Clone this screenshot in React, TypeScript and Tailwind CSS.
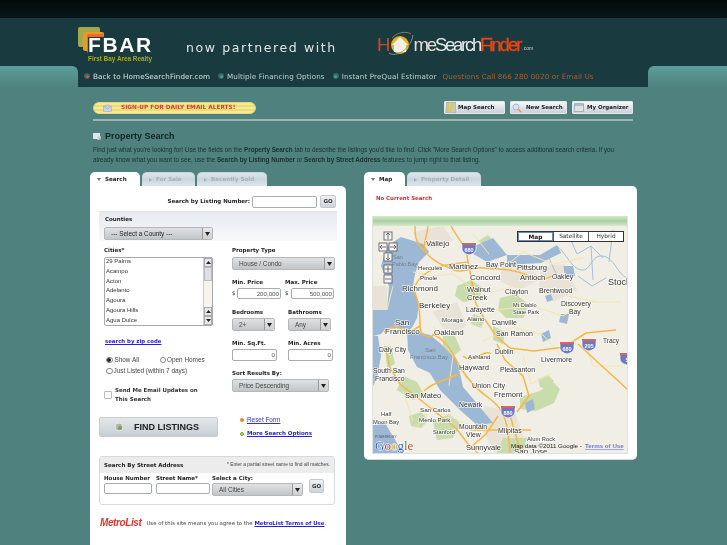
import React from "react";

const Arrow = () => (
  <svg width="5" height="4" viewBox="0 0 5 4"><path d="M0 0h5L2.5 4z" fill="#222" /></svg>
);

const Select = ({ w, label, h = "h-[13px]", text = "text-[#444]" }: { w: string; label: string; h?: string; text?: string }) => (
  <div className={`${w} ${h} ${text} flex items-center justify-between rounded-[2px] border border-[#b5b8ba] bg-gradient-to-b from-[#dfe1e3] to-[#c3c6c8] text-[5.6px]`}>
    <span className="pl-1.5 font-['Liberation_Sans',sans-serif] text-[6.4px]">{label}</span>
    <span className="flex h-full w-[10px] items-center justify-center border-l border-[#999] bg-gradient-to-b from-[#e8e8e8] to-[#cfcfcf]"><Arrow /></span>
  </div>
);

const Input = ({ w, h = "h-[11px]", value = "" }: { w: string; h?: string; value?: string }) => (
  <div className={`${w} ${h} rounded-[2px] border border-[#a9adb0] bg-white pr-px text-right font-['Liberation_Sans',sans-serif] text-[6.2px] leading-[10px] text-[#555]`}>{value}</div>
);

const Lbl = ({ children, className = "" }: { children: React.ReactNode; className?: string }) => (
  <div className={`text-[5.5px] font-bold leading-[7px] text-[#222] ${className}`}>{children}</div>
);

const Go = ({ className = "" }: { className?: string }) => (
  <div className={`flex items-center justify-center rounded-[2px] border border-[#c2c8cd] bg-gradient-to-b from-[#eef1f4] to-[#ccd3da] text-[5.5px] font-bold text-[#333] ${className}`}>GO</div>
);

const Radio = ({ on = false }: { on?: boolean }) => (
  <span className="flex h-[6.5px] w-[6.5px] items-center justify-center rounded-full border border-[#888] bg-white">
    {on && <span className="h-[4px] w-[4px] rounded-full bg-[#222]" />}
  </span>
);

const Tab = ({ w, label, active = false }: { w: string; label: string; active?: boolean }) => (
  <div className={`${w} flex h-[14px] items-center gap-[4px] rounded-t-[5px] pl-[7px] text-[5.6px] font-bold ${active ? "bg-white text-[#222]" : "border-t border-[#c5d3dc] bg-gradient-to-b from-[#dce5ea] via-[#c9d6e0] to-[#dde5ea] text-[#a6b0b7]"}`}>
    <span className={active ? "text-[#777]" : "text-[#a6b0b7]"}>
      {active ? <svg width="4" height="3" viewBox="0 0 4 3"><path d="M0 0h4L2 3z" fill="#777" /></svg> : <svg width="3" height="4" viewBox="0 0 3 4"><path d="M0 0l3 2-3 2z" fill="#a6b0b7" /></svg>}
    </span>
    {label}
  </div>
);

const NavBullet = ({ c }: { c: string }) => (
  <span className="flex h-[6px] w-[6px] items-center justify-center rounded-full bg-[#2f6a6a]"><span className={`h-[3px] w-[3px] rounded-full ${c}`} /></span>
);

const TopBtn = ({ w, label, icon }: { w: string; label: string; icon: React.ReactNode }) => (
  <div className={`${w} flex h-[13px] items-center gap-[2px] rounded-[1px] border border-[#e4e8ec] bg-gradient-to-b from-[#f6f7f9] to-[#c9d0d9] pl-px text-[5.5px] font-bold text-[#1c1c1c]`}>
    {icon}
    {label}
  </div>
);

type L = [string, number, number, number?, string?];
const labels: L[] = [
  ["Vallejo", 53, 20, 8], ["Hercules", 45, 44, 6.2], ["Martinez", 76, 43, 7.6], ["Bay Point", 113, 41, 7], ["Pittsburg", 144, 44, 7.6],
  ["Pinole", 47, 54, 6.2], ["Concord", 97, 54, 8], ["Antioch", 147, 54, 7.6], ["Oakley", 179, 53, 6.8], ["Stock", 235, 59, 9],
  ["Richmond", 29, 65, 8], ["Walnut", 94, 66, 7.6], ["Creek", 94, 74, 7.6], ["Clayton", 132, 68, 6.8], ["Brentwood", 166, 67, 7],
  ["Discovery", 188, 80, 6.8], ["Bay", 196, 88, 6.8], ["Mt Diablo", 140, 81, 5.6], ["State Park", 140, 87.5, 5.6], ["Berkeley", 46, 82, 8],
  ["Lafayette", 93, 86, 7], ["San", 22, 99, 8], ["Francisco", 12, 108, 8], ["Moraga", 69, 96, 6.2], ["Alamo", 94, 95, 6.2],
  ["Danville", 119, 99, 7], ["Oakland", 61, 109, 8], ["San Ramon", 123, 110, 7], ["Daly City", 6, 126, 6.8], ["Ashland", 95, 133, 6.2],
  ["Dublin", 122, 128, 6.5], ["Livermore", 168, 136, 7], ["Tracy", 230, 117, 6.5], ["Hayward", 86, 144, 7.6], ["Pleasanton", 127, 146, 7],
  ["South San", 0, 147, 6.8], ["Francisco", 2, 155, 6.8], ["Union City", 99, 162, 7.2], ["Fremont", 121, 171, 7.6], ["San Mateo", 32, 172, 7.5],
  ["Newark", 86, 181, 6.8], ["San Carlos", 47, 186, 6.2], ["Half", 8, 190, 5.8], ["Moon Bay", 0, 198, 5.8], ["Menlo Park", 46, 196, 6.2],
  ["Stanford", 60, 208, 5.8], ["Mountain", 86, 203, 6.8], ["View", 93, 210.5, 6.8], ["Milpitas", 125, 207, 7], ["Alum Rock", 154, 215, 5.8],
  ["Sunnyvale", 93, 224, 7.5], ["San Jose", 141, 228, 8],
  ["San", 20, 33, 5.5, "#6f7f90"], ["Pablo Bay", 19, 40, 5.5, "#6f7f90"], ["San", 52, 126, 6, "#6f7f90"], ["Francisco Bay", 37, 133, 6, "#6f7f90"],
];

const Shield = ({ x, y, t }: { x: number; y: number; t: string }) => (
  <g transform={`translate(${x} ${y})`}>
    <path d="M-7-5h14v6c0 3-3 5-7 6-4-1-7-3-7-6z" fill="#6b78c4" stroke="#fff" strokeWidth=".7" />
    <path d="M-7-5h14v2.2h-14z" fill="#d9645d" />
    <text x="0" y="3.5" textAnchor="middle" fontSize="5.5" fontWeight="700" fill="#fff" fontFamily="Liberation Sans">{t}</text>
  </g>
);

const Ctl = ({ x, y, d }: { x: number; y: number; d: string }) => (
  <g transform={`translate(${x} ${y})`}>
    <rect x="-4" y="-4" width="8" height="8" fill="#f4f4f4" stroke="#555" strokeWidth=".8" />
    <path d={d} fill="none" stroke="#555" strokeWidth=".8" />
  </g>
);

const MapArt = () => (
  <svg width="254" height="227" viewBox="0 0 254 227" className="absolute inset-0">
    <rect width="254" height="227" fill="#f1eee6" />
    <g fill="#e8e3d6">
      <path d="M40 6l30-6 10 14-16 8-18-2zM128 36l30 4 8 14-20 10-18-8zM168 40l24-2 12 26-24 12-14-16zM112 180l30 6 10 30-30 11-16-30zM60 86l24-10 10 24-20 8zM0 60l14 0 0 24-14 0z" />
    </g>
    <g fill="#c9dcab">
      <path d="M84 60l14-6 12 8-4 12-16 2-8-6zM127 72l16-4 12 10-4 14-18 0-8-8zM147 171l20-6 12-10 8 8-6 14-18 8-16-2zM165 153l10-4 6 6-6 8-8-2zM30 150l14 6 8 14-12 4-16-10zM60 196l16-8 12 10-8 14-16 2zM36 190l12-4 8 8-8 8-10-2zM70 110l12 0 6 14-8 6-10-10zM105 15l10-6 6 6-8 6zM120 100l12 6-2 12-10-4zM100 88l12 4-4 10-10-4zM130 212l24 0-4 15-26 0zM12 120l6 0 4 18-8 4z" />
    </g>
    <g fill="#9db8d4">
      <path d="M14 20L28 11 50 18 56 26 46 36 42 48 40 60 46 78 44 92 40 100 37 104 57 109 67 117 84 134 87 147 90 161 107 181 120 197 104 199 87 184 67 164 57 147 44 141 35 124 34 104 30 102 12 103 8 108 0 110 0 84 14 84 16 60 8 40z" />
      <path d="M0 110H5L8 130 4 152 0 160zM0 199l12-2 18 30H0zM97 22l23-10 14 17-20 7-17-10zM134 29l33 0 17-10 4 8-20 10-34 2z" />
      <path d="M188 88l8 0 -2 10-8-2zM190 40h10l2 10-10 2zM152 177l8-4 2 10-8 4zM168 108l8-4 2 8-8 4zM172 70l6-2 2 6-6 2z" />
    </g>
    <g fill="none" stroke="#a7bfd8" strokeWidth="1">
      <path d="M184 20c10 8 14 22 24 24s10-16 22-14 14 18 24 22M196 10l8 18 14-8 12 12M205 50l14 10 14-8M218 20l2 34M240 4l-4 32M176 32l10 22 12-14" />
    </g>
    <g fill="none" stroke="#f7e6a8" strokeWidth="1">
      <path d="M40 46l20 4 20-2 20 14 20 4 30-8M120 84l40-4 30 10 24-14 34 0M110 115l30-14 30 8 20 22M150 130l8 28 20-10M40 205l20-24 30 16 30 6 40 10M130 42l20-16 30 12 30-6M20 60l-6 24M60 100l20 30 -4 30M190 40l4 30 30 6M210 110l10 30 30 0M30 165l10 30M100 8l16 20" />
    </g>
    <g fill="none" stroke="#f6b845" strokeWidth="1.5">
      <path d="M78 0c6 12 16 20 17 36l4 20 4 22 8 14 12 18 14 12 24 3 30-4 22-14 30-3" />
      <path d="M55 0c-1 12-6 18-2 26s18 14 28 18 18-4 30-2 28 0 40 6 22 6 28 2" />
      <path d="M42 0c0 10 0 16 10 26" />
      <path d="M95 36c-14 2-28 2-40 10s-16 16-12 24 4 20 4 30 10 14 14 8" />
      <path d="M47 100l-10 6-16-6-10 6M61 109c14 6 20 22 26 32s16 22 30 32 18 22 20 54" />
      <path d="M90 130c10 10 20 -8 28 -2M124 118l8 16 18 16 6 20-12 16" />
      <path d="M12 120l5 22 10 16 18 14 20 16 18 14 12 16 10 9" />
      <path d="M87 147c-14 8-26 8-36 18" />
      <path d="M205 118l49 45M98 204l60 0M125 190l-12 18-16 14" />
      <path d="M148 227l-6-20-6-22" />
    </g>
    <Shield x={96} y={22} t="680" />
    <Shield x={194} y={121} t="680" />
    <Shield x={216} y={118} t="205" />
    <Shield x={135} y={185} t="880" />
    <Shield x={254} y={132} t="5" />
    <g fontFamily="Liberation Sans, sans-serif">
      {labels.map(([t, x, y, s, c], i) => (
        <text key={i} x={x} y={y} fontSize={s} fill={c ?? "#333"} stroke={c ? "none" : "#fff"} strokeWidth="1.6" strokeOpacity=".75" style={{ paintOrder: "stroke" }}>{t}</text>
      ))}
    </g>
    <text x="2" y="212" fontSize="3.2" fill="#555" fontFamily="Liberation Sans">POWERED BY</text>
    <text x="2" y="224" fontSize="13" fontFamily="Liberation Serif" stroke="#fff" strokeWidth="1" style={{ paintOrder: "stroke" }}>
      <tspan fill="#3567c7">G</tspan><tspan fill="#d6402c">o</tspan><tspan fill="#e9b32c">o</tspan><tspan fill="#3567c7">g</tspan><tspan fill="#3d9b3d">l</tspan><tspan fill="#d6402c">e</tspan>
    </text>
    <text x="138" y="222" fontSize="6.2" fill="#222" fontFamily="Liberation Sans">Map data ©2011 Google -</text>
    <text x="212" y="222" fontSize="6.2" fill="#6f78d8" textDecoration="underline" fontWeight="700" fontFamily="Liberation Sans">Terms of Use</text>
    <Ctl x={15} y={10} d="M0 3V-3M-2-1L0-3 2-1" />
    <Ctl x={10} y={21} d="M3 0H-3M-1-2L-3 0-1 2" />
    <Ctl x={20} y={21} d="M-3 0H3M1-2L3 0 1 2" />
    <Ctl x={15} y={31} d="M0-3V3M-2 1L0 3 2 1" />
    <Ctl x={15} y={43} d="M-3 0H3M0-3V3" />
    <Ctl x={15} y={53} d="M-3 0H3" />
  </svg>
);

export default function App() {
  return (
    <div className="h-[545px] w-[727px] overflow-hidden bg-[#4f827e] font-['DejaVu_Sans',sans-serif] blur-[0.35px]">
      <div className="h-[18px] bg-gradient-to-b from-[#020b0b] to-[#071717]" />
      <div className="flex h-[48px] bg-[#193a3e]">
        {/* FBAR logo */}
        <div className="relative ml-[78px] mt-[9px] w-[74px]">
          <svg width="26" height="26" viewBox="0 0 26 26" className="absolute left-0 top-0">
            <rect x="0" y="0" width="22" height="20" rx="2" fill="#a3a84d" />
            <rect x="5" y="5" width="21" height="19" rx="2" fill="#e99a22" />
            <rect x="9" y="7" width="17" height="19" rx="2" fill="#f0692a" />
            <rect x="10" y="10" width="16" height="16" fill="#193a3e" />
          </svg>
          <div className="absolute left-[10px] top-[7px] font-['Liberation_Sans',sans-serif] text-[21px] font-bold leading-[22px] tracking-[1.6px] text-white">FBAR</div>
          <div className="absolute left-[10px] top-[28px] whitespace-nowrap font-['Liberation_Sans',sans-serif] text-[6.4px] font-bold leading-[7px] text-[#a5a81f]">First Bay Area Realty</div>
        </div>
        <div className="ml-[34px] mt-[23px] w-[150px] whitespace-nowrap text-[12.5px] leading-[14px] tracking-[1.6px] text-[#dfe6e6]">now partnered with</div>
        {/* HomeSearchFinder logo */}
        <div className="ml-[41px] mt-[12px] flex h-[30px] items-center font-['Liberation_Sans',sans-serif] text-[18.5px] tracking-[-2px]">
          <span className="text-[#d24a20]">H</span>
          <svg width="27" height="30" viewBox="0 0 27 30" className="-mx-px">
            <circle cx="13" cy="15" r="9" fill="#eab31d" />
            <path d="M5 15l8-8 8 8h-2v7h-12v-7z" fill="#f2efe9" />
            <path d="M2 23C9 28 24 19 26 5" fill="none" stroke="#8b9ca0" strokeWidth=".9" />
            <path d="M5 8C10 2 20 1 24 4" fill="none" stroke="#a0867a" strokeWidth=".8" />
          </svg>
          <span className="text-[#e9dcd4]">me</span>
          <span className="tracking-[-2.3px] text-[#e4eaea]">Search</span>
          <span className="text-[#ee4412] [-webkit-text-stroke:0.3px_#ee4412]">Finder</span>
          <span className="mt-[8px] pl-[2px] text-[5px] tracking-normal text-[#cfd8d8]">.com</span>
        </div>
      </div>
      {/* nav */}
      <div className="flex h-[21px] bg-[#193a3e]">
        <div className="h-full w-[78px] rounded-tr-[6px] bg-gradient-to-b from-[#5b9f9b] to-[#4f827e]" />
        <div className="flex flex-1 items-center gap-[8px] whitespace-nowrap rounded-b-[6px] bg-[#193a3e] pl-[6px] text-[7.2px] leading-none tracking-[0.1px] text-[#bfd0d0]">
          <span className="flex items-center gap-[3px] text-[#d6e0e0]"><NavBullet c="bg-[#d9542b]" />Back to HomeSearchFinder.com</span>
          <span className="flex items-center gap-[3px]"><NavBullet c="bg-[#4a9a96]" />Multiple Financing Options</span>
          <span className="flex items-center gap-[3px]"><NavBullet c="bg-[#4a9a96]" />Instant PreQual Estimator</span>
          <span className="-ml-[2px] text-[#b0602c]">Questions Call 866 280 0020 or Email Us</span>
        </div>
        <div className="h-full w-[79px] rounded-tl-[6px] bg-gradient-to-b from-[#5b9f9b] to-[#4f827e]" />
      </div>

      {/* content */}
      <div className="px-[90px]">
        <div className="ml-[3px] mt-[14px] flex h-[13px] w-[540px] items-center justify-between">
          <div className="flex h-[12px] w-[163px] items-center rounded-full border border-[#e2d67e] bg-[repeating-linear-gradient(180deg,#f6ea98_0px,#f6ea98_2px,#ecdc74_2px,#ecdc74_4px)] pl-[9px] text-[5.8px] font-bold text-[#d93a2c]">
            <svg width="9" height="8" viewBox="0 0 9 8" className="mr-[9px]"><rect x=".5" y="2" width="8" height="5.5" fill="#c6d4e6" stroke="#8fa5c2" strokeWidth=".5" /><path d="M.5 2L4.5 5 8.5 2M2 2l2.5-2L7 2" fill="none" stroke="#8fa5c2" strokeWidth=".5" /></svg>
            SIGN-UP FOR DAILY EMAIL ALERTS!
          </div>
          <div className="flex gap-[5px]">
            <TopBtn w="w-[61px]" label="Map Search" icon={<svg width="10" height="11" viewBox="0 0 10 11"><rect width="10" height="11" fill="#c5cdb4" stroke="#8d97a5" strokeWidth=".6" /><path d="M2 1v9M7 1L4 10" stroke="#e8c43d" strokeWidth="1.4" /></svg>} />
            <TopBtn w="w-[57px]" label="New Search" icon={<svg width="10" height="10" viewBox="0 0 10 10" className="mr-[2px]"><circle cx="4" cy="4" r="3" fill="#d5e2f2" stroke="#8ba7cb" strokeWidth=".7" /><path d="M6 6l3 3" stroke="#e78b3c" strokeWidth="1.2" /></svg>} />
            <TopBtn w="w-[61px]" label="My Organizer" icon={<svg width="10" height="9" viewBox="0 0 10 9" className="mr-[1px]"><rect x=".4" y=".4" width="9.2" height="8.2" rx=".6" fill="#e4e4d6" stroke="#7d93bc" strokeWidth=".7" /><path d="M.4 2h9.2" stroke="#7d93bc" /></svg>} />
          </div>
        </div>
        <div className="ml-[3px] mt-[5px] h-[2px] w-[540px] bg-[#9db5b2]" />

        <div className="ml-[3px] mt-[9px] flex items-center gap-[4px]">
          <svg width="8" height="8" viewBox="0 0 8 8"><rect width="7" height="6" y="1" fill="#dfe6f2" /><circle cx="5.5" cy="5.5" r="2" fill="#c8d6ea" stroke="#f0f3f8" strokeWidth=".5" /><path d="M6.5 6.5L8 8" stroke="#d99434" /></svg>
          <div className="font-['Liberation_Sans',sans-serif] text-[9px] font-bold leading-[12px] text-[#152322]">Property Search</div>
        </div>
        <div className="ml-[3px] mt-[3px] w-[540px] whitespace-nowrap font-['Liberation_Sans',sans-serif] text-[6.3px] leading-[9.5px] text-[#17302e]">
          <div>Find just what you're looking for! Use the fields on the <b>Property Search</b> tab to describe the listings you'd like to find. Click "More Search Options" to access additional search criteria. If you</div>
          <div>already know what you want to see, use the <b>Search by Listing Number</b> or <b>Search by Street Address</b> features to jump right to that listing.</div>
        </div>

        <div className="mt-[8px] flex items-start gap-[18px]">
          {/* left panel */}
          <div className="w-[256px]">
            <div className="flex gap-[2px]">
              <Tab w="w-[50px]" label="Search" active />
              <Tab w="w-[53px]" label="For Sale" />
              <Tab w="w-[70px]" label="Recently Sold" />
            </div>
            <div className="h-[400px] rounded-tr-[5px] bg-white pt-[9px]">
              <div className="mr-[10px] flex items-center justify-end">
                <Lbl>Search by Listing Number:</Lbl>
                <Input w="ml-[2px] w-[65px]" h="h-[12px]" />
                <Go className="ml-[3px] h-[13px] w-[16px]" />
              </div>
              <div className="ml-[9px] mr-[9px] mt-[3px] h-[30px] border-t border-[#dfe5ea] bg-gradient-to-b from-[#e6eaef] to-[#f8f9fb] pl-[5px] pt-[4px]">
                <Lbl className="pl-px">Counties</Lbl>
                <div className="mt-[4px]"><Select w="w-[109px]" label="--- Select a County ---" text="text-[#222]" /></div>
              </div>

              <div className="ml-[14px] mt-[6px] flex">
                {/* col 1 */}
                <div className="w-[128px]">
                  <Lbl>Cities*</Lbl>
                  <div className="mt-[3px] flex h-[69px] w-[109px] rounded-[2px] border border-[#a5a9ad] bg-white">
                    <div className="-mt-px flex-1 pl-px font-['Liberation_Sans',sans-serif] text-[6px] leading-[9.8px] text-[#333]">
                      {["29 Palms", "Acampo", "Acton", "Adelanto", "Agoura", "Agoura Hills", "Agua Dulce"].map((c) => <div key={c}>{c}</div>)}
                    </div>
                    <div className="flex w-[9px] flex-col border-l border-[#ccc] bg-[#f7f4ec]">
                      <div className="flex h-[9px] items-center justify-center border border-[#aaa] bg-[#e8e8e8]"><svg width="5" height="3" viewBox="0 0 5 3"><path d="M0 3h5L2.5 0z" fill="#222" /></svg></div>
                      <div className="h-[14px] border border-[#b5bbc0] bg-[#dde1e4]" />
                      <div className="flex-1" />
                      <div className="flex h-[9px] items-center justify-center border border-[#aaa] bg-[#e8e8e8]"><svg width="5" height="3" viewBox="0 0 5 3"><path d="M0 3h5L2.5 0z" fill="#222" /></svg></div>
                      <div className="flex h-[9px] items-center justify-center border border-[#aaa] bg-[#e8e8e8]"><svg width="5" height="3" viewBox="0 0 5 3"><path d="M0 0h5L2.5 3z" fill="#222" /></svg></div>
                    </div>
                  </div>
                  <div className="ml-px mt-[12px] text-[5.4px] font-bold leading-[7px] text-[#2222dd] underline">search by zip code</div>
                  <div className="ml-[2px] mt-[11px] flex items-center font-['Liberation_Sans',sans-serif] text-[6.4px] leading-[8px] text-[#444]">
                    <Radio on /><span className="ml-px w-[46px] pl-px">Show All</span><Radio /><span className="ml-px">Open Homes</span>
                  </div>
                  <div className="ml-[2px] mt-[3px] flex items-center font-['Liberation_Sans',sans-serif] text-[6.4px] leading-[8px] text-[#444]">
                    <Radio /><span className="ml-px">Just Listed (within 7 days)</span>
                  </div>
                  <div className="mt-[11px] flex items-center gap-[3px]">
                    <div className="h-[8px] w-[8px] rounded-[1px] border border-[#bbb] bg-white" />
                    <div className="text-[5.5px] font-bold leading-[9px] text-[#333]">Send Me Email Updates on<br />This Search</div>
                  </div>
                </div>
                {/* col 2 */}
                <div className="w-[103px]">
                  <Lbl>Property Type</Lbl>
                  <div className="mt-[3px]"><Select w="w-[103px]" label="House / Condo" /></div>
                  <div className="mt-[9px] flex">
                    <div className="w-[53px]">
                      <Lbl>Min. Price</Lbl>
                      <div className="mt-[2px] flex items-center gap-px text-[6px] text-[#333]"><span className="w-[4px] text-[5.5px]">$</span><Input w="w-[44px]" value="200,000" /></div>
                    </div>
                    <div>
                      <Lbl>Max. Price</Lbl>
                      <div className="mt-[2px] flex items-center gap-px text-[6px] text-[#333]"><span className="w-[5px] text-[5.5px]">$</span><Input w="w-[43px]" value="500,000" /></div>
                    </div>
                  </div>
                  <div className="mt-[10px] flex">
                    <div className="w-[56px]">
                      <Lbl>Bedrooms</Lbl>
                      <div className="mt-[2px]"><Select w="w-[43px]" label="2+" /></div>
                    </div>
                    <div>
                      <Lbl>Bathrooms</Lbl>
                      <div className="mt-[2px]"><Select w="w-[43px]" label="Any" /></div>
                    </div>
                  </div>
                  <div className="mt-[9px] flex">
                    <div className="w-[56px]">
                      <Lbl>Min. Sq.Ft.</Lbl>
                      <div className="mt-[2px]"><Input w="w-[45px]" h="h-[12px]" value="0" /></div>
                    </div>
                    <div>
                      <Lbl>Min. Acres</Lbl>
                      <div className="mt-[2px]"><Input w="w-[45px]" h="h-[12px]" value="0" /></div>
                    </div>
                  </div>
                  <Lbl className="mt-[9px]">Sort Results By:</Lbl>
                  <div className="mt-[2px]"><Select w="w-[97px]" label="Price Descending" /></div>
                </div>
              </div>

              <div className="ml-[9px] mt-[13px] flex items-start">
                <div className="flex h-[20px] w-[119px] items-center rounded-[2px] border border-[#c6ccd0] bg-gradient-to-b from-[#e4e7e9] to-[#c7ced3] pl-[14px] text-[9px] leading-none text-[#222]">
                  <svg width="10" height="10" viewBox="0 0 10 10" className="mr-[10px]"><circle cx="5" cy="5" r="4" fill="#aeb4b2" stroke="#e5e8e6" /><circle cx="6" cy="6" r="2" fill="#7ba43c" /></svg>
                  <span className="font-['Liberation_Sans',sans-serif] font-bold">FIND LISTINGS</span>
                </div>
                <div className="-mt-px ml-[22px] text-[5.5px] leading-[7px]">
                  <div className="flex items-center gap-[3px] font-['Liberation_Sans',sans-serif] text-[6.4px] text-[#3333dd]"><span className="h-[4px] w-[4px] rounded-full bg-[#e08a2c]" /><span className="underline">Reset Form</span></div>
                  <div className="mt-[7px] flex items-center gap-[3px] font-bold text-[#2222dd]"><span className="h-[4px] w-[4px] rounded-full border border-[#6f9a33] bg-[#c8da9a]" /><span className="underline">More Search Options</span></div>
                </div>
              </div>

              <div className="ml-[9px] mt-[19px] h-[49px] w-[236px] rounded-[3px] border border-[#d7dadc] bg-white">
                <div className="flex h-[16px] items-center justify-between rounded-t-[3px] bg-[#ececec] px-[4px]">
                  <Lbl>Search By Street Address</Lbl>
                  <div className="font-['Liberation_Sans',sans-serif] text-[4.9px] text-[#444]">* Enter a partial street name to find all matches.</div>
                </div>
                <div className="ml-[4px] mt-[2px] flex">
                  <div className="mr-[4px]">
                    <Lbl>House Number</Lbl>
                    <div className="mt-[1px]"><Input w="w-[48px]" /></div>
                  </div>
                  <div className="mr-[2px]">
                    <Lbl>Street Name*</Lbl>
                    <div className="mt-[1px]"><Input w="w-[54px]" /></div>
                  </div>
                  <div>
                    <Lbl>Select a City:</Lbl>
                    <div className="mt-[1px]"><Select w="w-[91px]" label="All Cities" /></div>
                  </div>
                  <Go className="ml-[6px] mt-[4px] h-[14px] w-[15px]" />
                </div>
              </div>

              <div className="ml-[10px] mt-[12px] flex items-center">
                <div className="font-['Liberation_Sans',sans-serif] text-[10px] font-bold italic leading-[12px] tracking-[-0.4px] text-[#d63a30]">MetroList</div>
                <div className="ml-[5px] whitespace-nowrap text-[5.4px] text-[#444]">Use of this site means you agree to the <span className="font-bold text-[#2222dd] underline">MetroList Terms of Use</span>.</div>
              </div>
            </div>
          </div>

          {/* right panel */}
          <div className="w-[273px]">
            <div className="flex gap-[2px]">
              <Tab w="w-[41px]" label="Map" active />
              <Tab w="w-[74px]" label="Property Detail" />
            </div>
            <div className="h-[274px] rounded-b-[5px] rounded-tr-[5px] border-b border-[#d4dad9] bg-white pt-[8px]">
              <div className="ml-[12px] h-[8px] text-[5.4px] font-bold leading-[8px] text-[#f01e1e]">No Current Search</div>
              <div className="ml-[8px] mt-[14px] w-[256px] border border-t-0 border-[#e0e2df]">
                <div className="h-[10px] bg-gradient-to-b from-[#d6e8cc] via-[#a9cfa0] to-[#d6e8cc]" />
                <div className="relative h-[227px] w-[254px] overflow-hidden">
                  <MapArt />
                  <div className="absolute left-[144px] top-[5px] flex h-[11px] border border-[#333] bg-white text-[5.8px] leading-[9px] text-[#333]">
                    <div className="w-[35px] border border-[#6d88b8] text-center font-bold text-[#111]">Map</div>
                    <div className="w-[35px] border-l border-[#555] text-center">Satellite</div>
                    <div className="w-[35px] border-l border-[#555] text-center">Hybrid</div>
                  </div>
                </div>
              </div>
            </div>
          </div>
        </div>
      </div>
    </div>
  );
}
